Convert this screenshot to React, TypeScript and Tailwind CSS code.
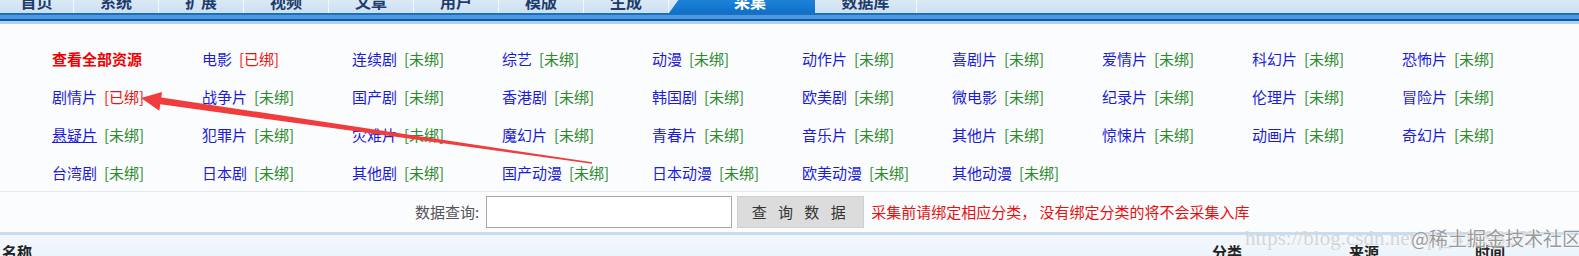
import React from "react";

type Cat = { name: string; bound?: boolean; all?: boolean; hover?: boolean };

const rows: Cat[][] = [
  [
    { name: "查看全部资源", all: true },
    { name: "电影", bound: true },
    { name: "连续剧" },
    { name: "综艺" },
    { name: "动漫" },
    { name: "动作片" },
    { name: "喜剧片" },
    { name: "爱情片" },
    { name: "科幻片" },
    { name: "恐怖片" },
  ],
  [
    { name: "剧情片", bound: true },
    { name: "战争片" },
    { name: "国产剧" },
    { name: "香港剧" },
    { name: "韩国剧" },
    { name: "欧美剧" },
    { name: "微电影" },
    { name: "纪录片" },
    { name: "伦理片" },
    { name: "冒险片" },
  ],
  [
    { name: "悬疑片", hover: true },
    { name: "犯罪片" },
    { name: "灾难片" },
    { name: "魔幻片" },
    { name: "青春片" },
    { name: "音乐片" },
    { name: "其他片" },
    { name: "惊悚片" },
    { name: "动画片" },
    { name: "奇幻片" },
  ],
  [
    { name: "台湾剧" },
    { name: "日本剧" },
    { name: "其他剧" },
    { name: "国产动漫" },
    { name: "日本动漫" },
    { name: "欧美动漫" },
    { name: "其他动漫" },
  ],
];

const tabs = [
  { label: "首页", w: "w-[74px]" },
  { label: "系统", w: "w-[85px]" },
  { label: "扩展", w: "w-[85px]" },
  { label: "视频", w: "w-[85px]" },
  { label: "文章", w: "w-[85px]" },
  { label: "用户", w: "w-[85px]" },
  { label: "模版", w: "w-[85px]" },
  { label: "生成", w: "w-[85px]" },
];

const font = { fontFamily: '"Noto Sans CJK SC", "Noto Sans", sans-serif' };

function Arrow() {
  // red annotation arrow drawn on top of the screenshot
  const tip = [141, 98];
  const tail = [592, 163];
  const dx = tail[0] - tip[0];
  const dy = tail[1] - tip[1];
  const len = Math.hypot(dx, dy);
  const ux = dx / len;
  const uy = dy / len;
  const px = -uy;
  const py = ux;
  const hb = [tip[0] + ux * 20, tip[1] + uy * 20];
  const pt = (b: number[], k: number) => `${b[0] + px * k},${b[1] + py * k}`;
  const points = [
    `${tip[0]},${tip[1]}`,
    pt(hb, -9),
    pt(hb, -3.5),
    pt(tail, -0.7),
    pt(tail, 0.7),
    pt(hb, 3.5),
    pt(hb, 10),
  ].join(" ");
  return (
    <svg className="absolute left-0 top-0 pointer-events-none" width="1579" height="256">
      <polygon points={points} fill="#f03c3c" />
    </svg>
  );
}

export default function App() {
  return (
    <div className="relative w-[1579px] h-[256px] overflow-hidden bg-[#fbfcfe]" style={font}>
      {/* top tab bar, only the lower part is in view */}
      <div className="h-[13px] overflow-hidden flex bg-gradient-to-b from-[#dbe9f6] to-[#cbe0f2]">
        <div className="flex -mt-[12px] h-[25px]">
          {tabs.map((t) => (
            <div
              key={t.label}
              className={`${t.w} h-[25px] flex items-center justify-center border-r border-[#f2f7fc] text-[16px] font-bold text-[#1d3c6c]`}
            >
              {t.label}
            </div>
          ))}
          <div className="w-[146px] h-[25px] flex items-center justify-center pl-[16px] text-[16px] font-bold text-white bg-gradient-to-b from-[#2a95e6] to-[#0d70c9] [clip-path:polygon(18px_0,100%_0,100%_100%,0_100%)]">
            采集
          </div>
          <div className="w-[102px] h-[25px] flex items-center justify-center border-r border-[#f2f7fc] text-[16px] font-bold text-[#1d3c6c]">
            数据库
          </div>
        </div>
      </div>
      <div className="h-[2px] bg-[#1c6fc0]" />
      <div className="h-[4px] bg-[#4b9be0]" />
      <div className="h-[2px] bg-[#0d5aa9]" />
      <div className="h-[3px] bg-[#b3d1ec]" />

      {/* category list */}
      <div className="pt-[15px] pl-[52px] text-[15px]">
        {rows.map((row, i) => (
          <div key={i} className="grid grid-cols-[repeat(10,150px)] h-[38px] items-center">
            {row.map((c) => (
              <div key={c.name} className="whitespace-nowrap leading-none">
                {c.all ? (
                  <span className="font-bold text-[#f00000]">{c.name}</span>
                ) : (
                  <>
                    <span className={`text-[#1c1cd8] ${c.hover ? "underline" : ""}`}>{c.name}</span>
                    <span className={`ml-[7px] ${c.bound ? "text-[#ee1111]" : "text-[#2a8a2a]"}`}>
                      {c.bound ? "[已绑]" : "[未绑]"}
                    </span>
                  </>
                )}
              </div>
            ))}
          </div>
        ))}
      </div>

      {/* search row */}
      <div className="border-t border-[#e4e9ef] h-[41px] flex items-center pl-[415px] text-[15px]">
        <span className="text-[#555555] mr-[7px]">数据查询:</span>
        <input className="w-[246px] h-[32px] border border-[#a6a6a6] bg-white outline-none" />
        <button className="ml-[5px] w-[127px] h-[32px] bg-[#dcdcdc] border border-[#cfcfcf] text-[#333333] tracking-[4px]">
          查 询 数 据
        </button>
        <span className="ml-[7px] text-[#e81010]">采集前请绑定相应分类， 没有绑定分类的将不会采集入库</span>
      </div>

      {/* list header */}
      <div className="h-[3px] bg-[#c7ddf0]" />
      <div className="h-[30px] bg-gradient-to-b from-[#f3f8fd] to-[#e8f2fb] grid grid-cols-[1212px_137px_126px_1fr] items-center pt-[5px] text-[15px] font-bold text-[#222222]">
        <span className="pl-[2px]">名称</span>
        <span>分类</span>
        <span>来源</span>
        <span>时间</span>
      </div>

      {/* watermark */}
      <div className="absolute left-[1245px] top-[223px] flex items-center pointer-events-none">
        <span className="text-[21px] text-[#d6d6d6] whitespace-nowrap" style={{ fontFamily: '"Liberation Serif", serif' }}>
          https://blog.csdn.net/qq_41598272
        </span>
      </div>
      <div className="absolute left-[1411px] top-[224px] text-[19px] text-[#9a9a9a] whitespace-nowrap [text-shadow:0_0_2px_#ffffff,0_0_2px_#ffffff]">
        @稀土掘金技术社区
      </div>

      <Arrow />
    </div>
  );
}
